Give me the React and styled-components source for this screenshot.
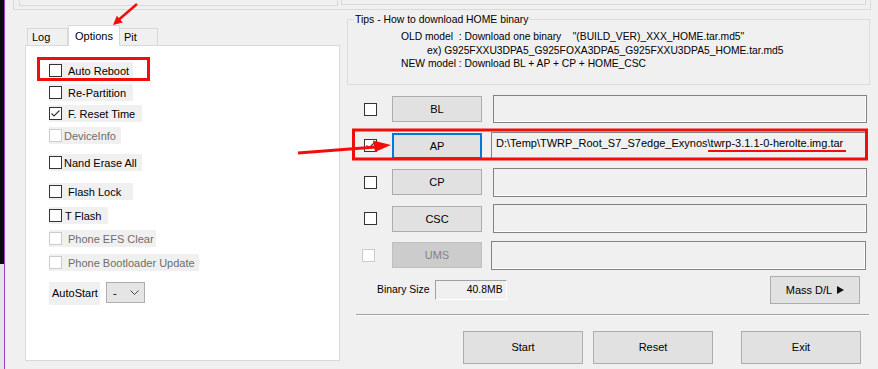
import React from 'react';
import styled, { createGlobalStyle } from 'styled-components';

const GlobalStyle = createGlobalStyle`
  html, body {
    margin: 0;
    padding: 0;
    background: #f0f0f0;
  }
  body {
    font-family: "Liberation Sans", Arial, sans-serif;
    font-size: 11px;
    color: #000;
    overflow: hidden;
  }
`;

const Screen = styled.div`
  position: relative;
  width: 878px;
  height: 369px;
  display: flex;
  overflow: hidden;
  background: #f0f0f0;
`;

const DesktopEdge = styled.div`
  flex: none;
  width: 4px;
  background: linear-gradient(#0c0c0c 0 264px, #e4e4e4 264px);
  border-right: 1px solid #a43cc4;
`;

const Window = styled.div`
  flex: 1;
  display: flex;
  flex-direction: column;
`;

const TopStrip = styled.div`
  box-sizing: border-box;
  display: flex;
  margin-left: 8px;
  width: 858px;
  height: 10px;
  padding-left: 5px;
  border: 1px solid #dadada;
  border-top: none;
`;

const TopInner = styled.div`
  box-sizing: border-box;
  width: ${p => p.$w}px;
  height: ${p => p.$h}px;
  margin-left: ${p => p.$ml || 0}px;
  border: 1px solid #dadada;
  border-top: none;
`;

const Main = styled.div`
  display: flex;
`;

/* ---------- left: tabs + options ---------- */

const LeftCol = styled.div`
  display: flex;
  flex-direction: column;
  width: 315px;
  margin-left: 20px;
`;

const TabRow = styled.div`
  display: flex;
  align-items: flex-end;
  height: 20px;
  margin-top: 15px;
  padding-left: 2px;
`;

const Tab = styled.div`
  box-sizing: border-box;
  position: relative;
  z-index: ${p => (p.$active ? 1 : 0)};
  width: ${p => p.$w}px;
  height: ${p => (p.$active ? 21 : 17)}px;
  margin-bottom: ${p => (p.$active ? -1 : 0)}px;
  padding-left: ${p => p.$pl}px;
  line-height: ${p => (p.$active ? 20 : 17)}px;
  background: ${p => (p.$active ? '#fff' : '#f0f0f0')};
  border: 1px solid #d9d9d9;
  border-bottom: none;
  border-left-width: ${p => (p.$noLeft ? 0 : 1)}px;
`;

const Panel = styled.div`
  box-sizing: border-box;
  height: 316px;
  padding: 16px 0 0 23px;
  background: #fff;
  border: 1px solid #d9d9d9;
`;

const CheckRow = styled.div`
  display: flex;
  align-items: center;
  width: ${p => p.$w}px;
  height: 17px;
  margin-top: ${p => p.$mt}px;
  background: #f0f0f0;
  color: ${p => (p.$disabled ? '#6d6d6d' : '#000')};
`;

const CheckLabel = styled.span`
  margin-left: ${p => p.$gap}px;
  white-space: nowrap;
`;

const Box = styled.span`
  box-sizing: border-box;
  flex: none;
  display: flex;
  align-items: center;
  justify-content: center;
  width: 13px;
  height: 13px;
  background: #fff;
  border: 1px solid ${p => (p.$disabled ? '#cccccc' : '#333')};
  margin-right: ${p => p.$mr || 0}px;
`;

const AutoRow = styled.div`
  display: flex;
  gap: 6px;
  margin-top: 11px;
`;

const AutoLabel = styled.div`
  box-sizing: border-box;
  width: 51px;
  height: 23px;
  padding-left: 3px;
  line-height: 23px;
  background: #f0f0f0;
`;

const Select = styled.div`
  box-sizing: border-box;
  display: flex;
  align-items: center;
  justify-content: space-between;
  width: 39px;
  height: 21px;
  padding: 0 5px 0 6px;
  background: #e5e5e5;
  border: 1px solid #adadad;
`;

/* ---------- right: tips + files ---------- */

const RightCol = styled.div`
  display: flex;
  flex-direction: column;
  width: 523px;
  margin-left: 7px;
`;

const Tips = styled.fieldset`
  min-width: 0;
  margin: 3px 0 0 0;
  padding: 4px 0 13px 6px;
  border: 1px solid #dcdcdc;
  font-size: 10.3px;
`;

const TipsTitle = styled.legend`
  padding: 0 1px;
  line-height: 13px;
  font-size: 10.4px;
`;

const TipLine = styled.div`
  padding-left: ${p => p.$indent}px;
  line-height: 13.5px;
  white-space: pre;
`;

const FileList = styled.div`
  display: flex;
  flex-direction: column;
  gap: 7.5px;
  margin-top: 10px;
`;

const FileRow = styled.div`
  display: grid;
  grid-template-columns: 45px 90px 1fr;
  align-items: center;
  height: 29px;
`;

const BoxCell = styled.div`
  display: flex;
  justify-content: flex-end;
`;

const Button = styled.div`
  box-sizing: border-box;
  display: flex;
  align-items: center;
  justify-content: center;
  gap: 5px;
  width: ${p => p.$w || 90}px;
  height: ${p => p.$h || 26}px;
  background: ${p => (p.$disabled ? '#cccccc' : '#e1e1e1')};
  color: ${p => (p.$disabled ? '#838383' : '#000')};
  border: ${p => (p.$focused ? '2px solid #0078d7' : `1px solid ${p.$disabled ? '#bfbfbf' : '#adadad'}`)};
`;

const PathField = styled.div`
  box-sizing: border-box;
  width: ${p => p.$w}px;
  height: ${p => p.$h}px;
  margin-left: ${p => p.$ml}px;
  padding-left: 4px;
  line-height: 20px;
  white-space: nowrap;
  overflow: hidden;
  background: #f0f0f0;
  border: 1px solid #828282;
  box-shadow: inset -1px -1px 0 #fff;
`;

const BinaryRow = styled.div`
  display: flex;
  align-items: center;
  height: 28px;
  margin-top: 6px;
  padding-left: 30px;
`;

const SizeLabel = styled.span`
  font-size: 10.4px;
`;

const SizeField = styled.div`
  box-sizing: border-box;
  width: 72px;
  height: 20px;
  margin-left: 5px;
  padding-right: 3px;
  line-height: 18px;
  text-align: right;
  font-size: 10.4px;
  border-top: 1px solid #a0a0a0;
  border-left: 1px solid #a0a0a0;
  border-bottom: 1px solid #fff;
  border-right: 1px solid #fff;
`;

const MassSlot = styled.div`
  margin-left: auto;
  margin-right: 10px;
`;

const Separator = styled.div`
  margin: 10px 1px 0 9px;
  border-top: 1px solid #a0a0a0;
  border-bottom: 1px solid #fff;
`;

const ActionRow = styled.div`
  display: flex;
  justify-content: flex-end;
  margin-top: 15px;
  padding-right: 9px;
`;

const ActionGap = styled.div`
  width: ${p => p.$w}px;
`;

const Annotations = styled.svg`
  position: absolute;
  left: 0;
  top: 0;
  pointer-events: none;
`;

const options = [
  { label: 'Auto Reboot', w: 84, gap: 6, mt: 0 },
  { label: 'Re-Partition', w: 84, gap: 6, mt: 5 },
  { label: 'F. Reset Time', w: 93, gap: 6, mt: 4, checked: true },
  { label: 'DeviceInfo', w: 72, gap: 2, mt: 5, disabled: true },
  { label: 'Nand Erase All', w: 93, gap: 2, mt: 10 },
  { label: 'Flash Lock', w: 84, gap: 6, mt: 12 },
  { label: 'T Flash', w: 59, gap: 3, mt: 7 },
  { label: 'Phone EFS Clear', w: 107, gap: 6, mt: 6, disabled: true },
  { label: 'Phone Bootloader Update', w: 150, gap: 6, mt: 7, disabled: true },
];

const files = [
  { name: 'BL', boxGap: 15, ml: 11, w: 374, h: 28 },
  { name: 'AP', boxGap: 15, ml: 9, w: 377, h: 28, checked: true, focused: true,
    path: 'D:\\Temp\\TWRP_Root_S7_S7edge_Exynos\\twrp-3.1.1-0-herolte.img.tar' },
  { name: 'CP', boxGap: 15, ml: 11, w: 374, h: 29 },
  { name: 'CSC', boxGap: 15, ml: 11, w: 374, h: 29 },
  { name: 'UMS', boxGap: 17, ml: 9, w: 375, h: 29, disabled: true },
];

function Check({ checked, disabled, mr }) {
  return (
    <Box $disabled={disabled} $mr={mr}>
      {checked && (
        <svg width="11" height="11" viewBox="0 0 11 11">
          <polyline points="1.5,5.5 4,8 9.5,2.5" fill="none" stroke="#333" strokeWidth="1.1" />
        </svg>
      )}
    </Box>
  );
}

export default function App() {
  return (
    <Screen>
      <GlobalStyle />
      <DesktopEdge />
      <Window>
        <TopStrip>
          <TopInner $w={319} $h={6} />
          <TopInner $w={525} $h={5} $ml={3} />
        </TopStrip>

        <Main>
          <LeftCol>
            <TabRow>
              <Tab $w={41} $pl={4}>Log</Tab>
              <Tab $w={52} $pl={6} $active>Options</Tab>
              <Tab $w={38} $pl={4} $noLeft>Pit</Tab>
            </TabRow>
            <Panel>
              {options.map(o => (
                <CheckRow key={o.label} $w={o.w} $mt={o.mt} $disabled={o.disabled}>
                  <Check checked={o.checked} disabled={o.disabled} />
                  <CheckLabel $gap={o.gap}>{o.label}</CheckLabel>
                </CheckRow>
              ))}
              <AutoRow>
                <AutoLabel>AutoStart</AutoLabel>
                <Select>
                  <span>-</span>
                  <svg width="9" height="6" viewBox="0 0 9 6">
                    <polyline points="0.5,0.5 4.5,4.5 8.5,0.5" fill="none" stroke="#444" strokeWidth="1" />
                  </svg>
                </Select>
              </AutoRow>
            </Panel>
          </LeftCol>

          <RightCol>
            <Tips>
              <TipsTitle>Tips - How to download HOME binary</TipsTitle>
              <TipLine $indent={47}>{'OLD model  : Download one binary    "(BUILD_VER)_XXX_HOME.tar.md5"'}</TipLine>
              <TipLine $indent={73}>ex) G925FXXU3DPA5_G925FOXA3DPA5_G925FXXU3DPA5_HOME.tar.md5</TipLine>
              <TipLine $indent={47}>NEW model : Download BL + AP + CP + HOME_CSC</TipLine>
            </Tips>

            <FileList>
              {files.map(f => (
                <FileRow key={f.name}>
                  <BoxCell>
                    <Check checked={f.checked} disabled={f.disabled} mr={f.boxGap} />
                  </BoxCell>
                  <Button $focused={f.focused} $disabled={f.disabled}>{f.name}</Button>
                  <PathField $ml={f.ml} $w={f.w} $h={f.h}>{f.path}</PathField>
                </FileRow>
              ))}
            </FileList>

            <BinaryRow>
              <SizeLabel>Binary Size</SizeLabel>
              <SizeField>40.8MB</SizeField>
              <MassSlot>
                <Button $w={90} $h={28}>
                  Mass D/L
                  <svg width="7" height="8" viewBox="0 0 7 8">
                    <polygon points="0,0 7,4 0,8" fill="#111" />
                  </svg>
                </Button>
              </MassSlot>
            </BinaryRow>

            <Separator />

            <ActionRow>
              <Button $w={120} $h={33}>Start</Button>
              <ActionGap $w={10} />
              <Button $w={120} $h={33}>Reset</Button>
              <ActionGap $w={28} />
              <Button $w={120} $h={33}>Exit</Button>
            </ActionRow>
          </RightCol>
        </Main>
      </Window>

      <Annotations width="878" height="369" viewBox="0 0 878 369">
        <g stroke="#f20d0d" fill="none">
          <rect x="38.5" y="58.5" width="110" height="21" strokeWidth="3" />
          <rect x="353.5" y="130" width="513" height="29" strokeWidth="3" />
          <line x1="708" y1="151" x2="846" y2="151" strokeWidth="2" />
          <line x1="137" y1="4" x2="119" y2="19.5" strokeWidth="2.5" />
          <line x1="298" y1="153" x2="376" y2="147" strokeWidth="3" />
        </g>
        <g fill="#f20d0d">
          <polygon points="113,25 122.8,22.5 116.8,15.7" />
          <polygon points="391,145 373,140.5 375,152" />
        </g>
      </Annotations>
    </Screen>
  );
}
